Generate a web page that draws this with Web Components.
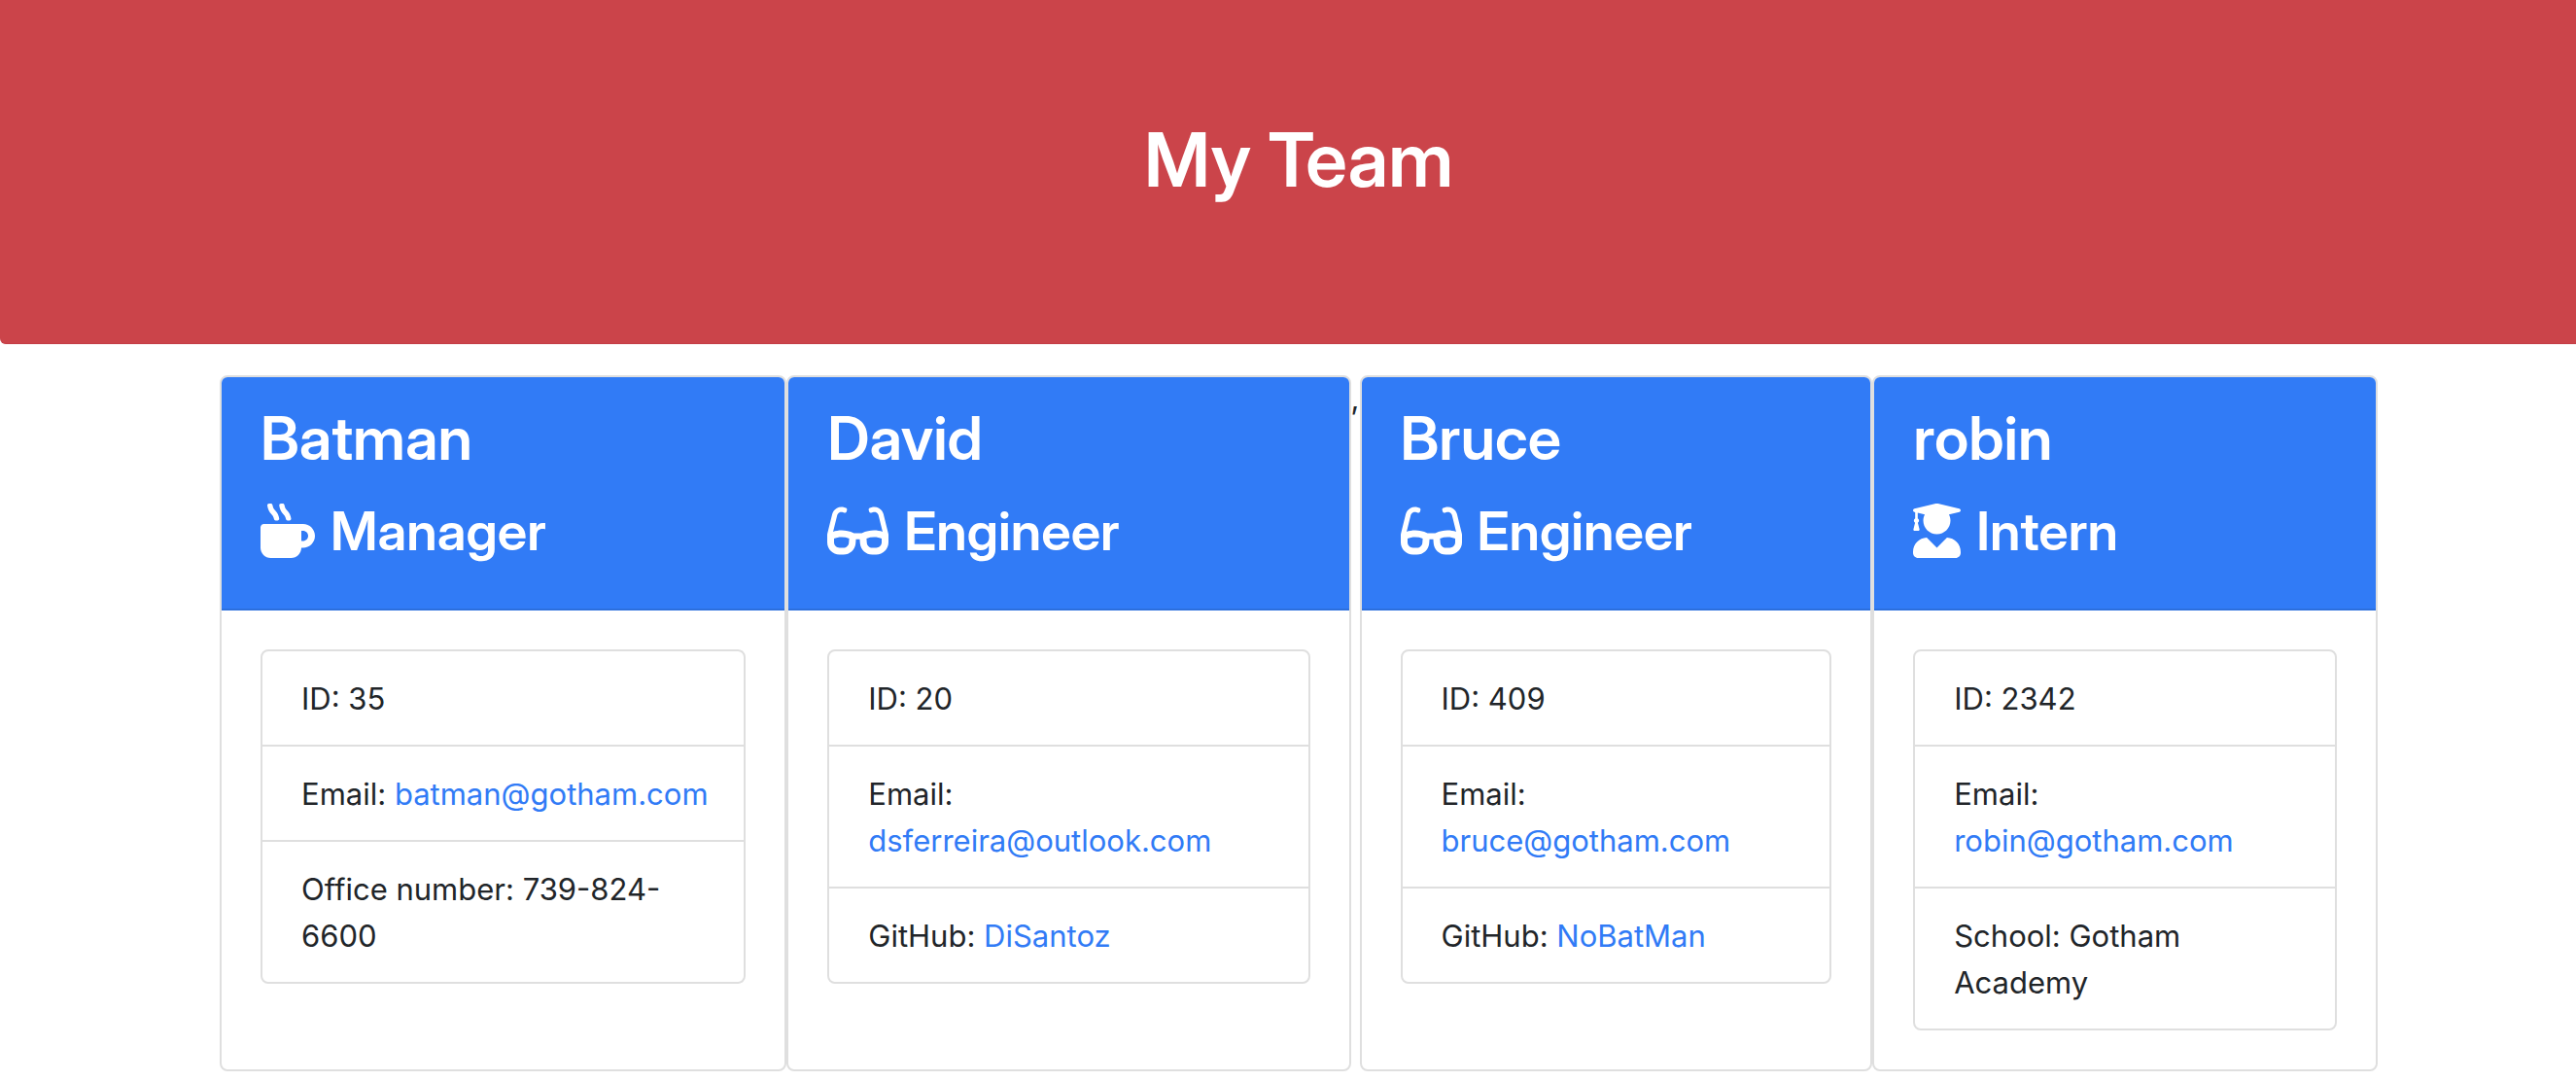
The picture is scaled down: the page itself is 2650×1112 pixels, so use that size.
<!DOCTYPE html>
<html lang="en">
<head>
<meta charset="utf-8">
<title>My Team</title>
<style>
html { overflow-x: hidden; }
body { margin: 0 -22px 0 0; background: #fff; color: #212529; font: 400 31px/48px Inter, "Liberation Sans", sans-serif; }
a { color: #317bf6; text-decoration: none; }
</style>
</head>
<body>
<team-banner>My Team</team-banner>
<team-roster>
  <team-card name="Batman" role-name="Manager" icon="mug" style="flex-grow:584">
    <team-detail>ID: 35</team-detail>
    <team-detail>Email: <a href="mailto:batman@gotham.com">batman@gotham.com</a></team-detail>
    <team-detail>Office number: 739-824-6600</team-detail>
  </team-card>
  <team-card name="David" role-name="Engineer" icon="glasses" style="flex-grow:581">
    <team-detail>ID: 20</team-detail>
    <team-detail>Email: <a href="mailto:dsferreira@outlook.com">dsferreira@outlook.com</a></team-detail>
    <team-detail>GitHub: <a href="https://github.com/DiSantoz">DiSantoz</a></team-detail>
  </team-card>
  <span>,</span>
  <team-card name="Bruce" role-name="Engineer" icon="glasses" style="flex-grow:528">
    <team-detail>ID: 409</team-detail>
    <team-detail>Email: <a href="mailto:bruce@gotham.com">bruce@gotham.com</a></team-detail>
    <team-detail>GitHub: <a href="https://github.com/NoBatMan">NoBatMan</a></team-detail>
  </team-card>
  <team-card name="robin" role-name="Intern" icon="graduate" style="flex-grow:520">
    <team-detail>ID: 2342</team-detail>
    <team-detail>Email: <a href="mailto:robin@gotham.com">robin@gotham.com</a></team-detail>
    <team-detail>School: Gotham Academy</team-detail>
  </team-card>
</team-roster>
<script>
const ICONS = {
  mug: [512, 'M127.1 146.5c1.3 7.7 8 13.5 16 13.5h16.5c9.8 0 17.6-8.5 16.3-18-3.8-28.2-16.4-54.2-36.6-74.7-14.4-14.7-23.6-33.3-26.4-53.5C111.8 5.9 105 0 96.8 0H80.4C70.6 0 63 8.5 64.1 18c3.9 31.9 18 61.3 40.6 84.4 12 12.2 19.7 27.5 22.4 44.1zm112 0c1.3 7.7 8 13.5 16 13.5h16.5c9.8 0 17.6-8.5 16.3-18-3.8-28.2-16.4-54.2-36.6-74.7-14.4-14.7-23.6-33.3-26.4-53.5C223.8 5.9 217 0 208.8 0h-16.4c-9.8 0-17.5 8.5-16.3 18 3.9 31.9 18 61.3 40.6 84.4 12 12.2 19.7 27.5 22.4 44.1zM400 192H32c-17.7 0-32 14.3-32 32v192c0 53 43 96 96 96h192c53 0 96-43 96-96h16c61.8 0 112-50.2 112-112s-50.2-112-112-112zm0 160h-16v-96h16c26.5 0 48 21.5 48 48s-21.5 48-48 48z'],
  glasses: [576, 'M574.1 280.37L528.75 98.66c-5.91-23.7-21.59-44.05-43-55.81-21.44-11.73-46.97-14.11-70.19-6.33l-15.25 5.08c-8.39 2.79-12.92 11.86-10.12 20.24l5.06 15.18c2.79 8.38 11.85 12.91 20.23 10.12l13.18-4.39c10.87-3.62 23-3.57 33.16 1.73 10.29 5.37 17.57 14.56 20.37 25.82l38.46 153.82c-22.19-6.81-49.79-12.46-81.2-12.46-34.77 0-73.98 7.02-114.85 26.74h-73.18c-40.87-19.74-80.08-26.75-114.86-26.75-31.42 0-59.02 5.65-81.21 12.46l38.46-153.83c2.79-11.25 10.09-20.45 20.38-25.81 10.16-5.3 22.28-5.35 33.15-1.73l13.17 4.39c8.38 2.79 17.44-1.74 20.23-10.12l5.06-15.18c2.8-8.38-1.73-17.45-10.12-20.24l-15.25-5.08c-23.22-7.78-48.75-5.41-70.19 6.33-21.41 11.77-37.09 32.11-43 55.8L1.9 280.37A64.218 64.218 0 0 0 0 295.86v70.25C0 429.01 51.58 480 115.2 480h37.12c60.28 0 110.37-45.94 114.88-105.37l2.93-38.63h35.75l2.93 38.63C313.31 434.06 363.4 480 423.68 480h37.12c63.62 0 115.2-50.99 115.2-113.88v-70.25c0-5.23-.64-10.43-1.9-15.5zM203.38 369.79C201.41 395.7 178.98 416 152.32 416H115.2C86.97 416 64 393.62 64 366.11v-37.54c18.12-6.49 43.42-12.92 72.58-12.92 23.86 0 47.26 4.33 69.93 12.92l-3.13 41.22zM512 366.12c0 27.51-22.97 49.88-51.2 49.88h-37.12c-26.67 0-49.1-20.3-51.06-46.21l-3.13-41.21c22.67-8.59 46.08-12.92 69.95-12.92 29.12 0 54.43 6.44 72.56 12.93v37.53z'],
  graduate: [448, 'M319.4 320.6L224 416l-95.4-95.4C57.1 323.7 0 382.2 0 454.4v9.6c0 26.5 21.5 48 48 48h352c26.5 0 48-21.5 48-48v-9.6c0-72.2-57.1-130.7-128.6-133.8zM13.6 79.8l6.4 1.5v58.4c-7 4.2-12 11.5-12 20.3 0 8.4 4.6 15.4 11.1 19.7L3.5 242c-1.7 6.9 2.1 14 7.6 14h41.8c5.5 0 9.3-7.1 7.6-14l-15.6-62.3C51.4 175.4 56 168.4 56 160c0-8.8-5-16.1-12-20.3V87.1l66 15.9c-8.6 17.2-14 36.4-14 57 0 70.7 57.3 128 128 128s128-57.3 128-128c0-20.6-5.3-39.8-14-57l96.3-23.2c18.2-4.4 18.2-27.1 0-31.5l-190.4-46c-13-3.1-26.7-3.1-39.7 0L13.6 48.2c-18.1 4.4-18.1 27.1 0 31.6z']
};
class TeamBanner extends HTMLElement {
  constructor() {
    super();
    this.attachShadow({ mode: 'open' }).innerHTML = `<style>
      :host { display: block; background: #cb444a; border-bottom: 1px solid #c43e46; border-radius: 0 0 6px 6px; padding: 116px 64px 141px; margin-bottom: 32px; text-align: center; }
      h1 { margin: 0; color: #fff; font-size: 77px; line-height: 96px; font-weight: 600; font-family: "Inter Display", Inter, sans-serif; }
    </style><header><h1><slot></slot></h1></header>`;
  }
}
class TeamRoster extends HTMLElement {
  constructor() {
    super();
    this.attachShadow({ mode: 'open' }).innerHTML = `<style>
      :host { display: block; }
      main { display: flex; max-width: 2220px; margin: 0 auto; }
    </style><main><slot></slot></main>`;
  }
}
class TeamCard extends HTMLElement {
  connectedCallback() {
    const [w, d] = ICONS[this.getAttribute('icon')];
    this.attachShadow({ mode: 'open' }).innerHTML = `<style>
      :host { display: block; box-sizing: border-box; flex-basis: 0; min-width: 0; border: 2px solid #dfdfdf; border-radius: 8px; background: #fff; }
      header { background: #317bf6; color: #fff; padding: 25px 40px 46px; border-bottom: 2px solid #2c6fdd; border-radius: 6px 6px 0 0; }
      h2, h3 { margin: 0; font-weight: 600; font-family: "Inter Display", Inter, sans-serif; }
      h2 { font-size: 62px; line-height: 76px; margin-bottom: 23px; }
      h3 { display: flex; align-items: center; gap: 16px; font-size: 55px; line-height: 68px; }
      svg { height: 56px; flex: none; fill: currentColor; }
      .body { padding: 40px; }
      .list { border: 2px solid #dfdfdf; border-radius: 8px; }
    </style>
    <header><h2>${this.getAttribute('name')}</h2>
    <h3><svg viewBox="0 0 ${w} 512" aria-hidden="true"><path d="${d}"/></svg>${this.getAttribute('role-name')}</h3></header>
    <div class="body"><div class="list" role="list"><slot></slot></div></div>`;
  }
}
class TeamDetail extends HTMLElement {
  constructor() {
    super();
    this.attachShadow({ mode: 'open' }).innerHTML = `<style>
      :host { display: block; padding: 25px 32px 23px 40px; border-bottom: 2px solid #dfdfdf; }
      :host(:last-child) { border-bottom: 0; }
    </style><slot></slot>`;
  }
  connectedCallback() { this.setAttribute('role', 'listitem'); }
}
customElements.define('team-banner', TeamBanner);
customElements.define('team-roster', TeamRoster);
customElements.define('team-card', TeamCard);
customElements.define('team-detail', TeamDetail);
</script>
</body>
</html>
